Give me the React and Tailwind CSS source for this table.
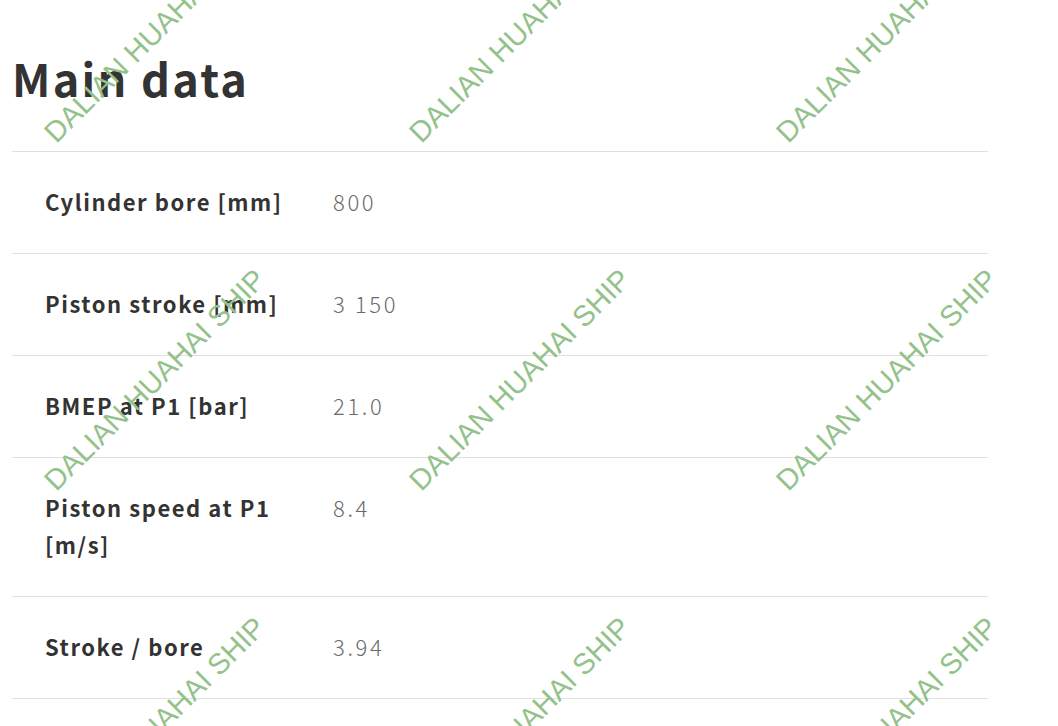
const rows = [
  { label: "Cylinder bore [mm]", value: "800" },
  { label: "Piston stroke [mm]", value: "3 150" },
  { label: "BMEP at P1 [bar]", value: "21.0" },
  { label: "Piston speed at P1 [m/s]", value: "8.4" },
  { label: "Stroke / bore", value: "3.94" },
];

// watermark centres, as seen on the page
const marks = [
  [155, 32], [520, 32], [887, 32],
  [155, 380], [520, 380], [887, 380],
  [155, 728], [520, 728], [887, 728],
];

const App = () => {
  return (
    <div className="relative min-h-[726px] overflow-hidden bg-white font-['Noto_Sans_CJK_JP','Noto_Sans',sans-serif]">
      <div className="w-[976px] ml-[12px] pt-[48px] pb-[40px]">
        <h2 className="text-[45px] leading-[60px] font-bold tracking-[0.05em] text-[#333] mb-[43px]">
          Main data
        </h2>
        <div className="border-b border-[#e0e0e0]">
          {rows.map((r) => (
            <div key={r.label} className="flex border-t border-[#e0e0e0] pt-[31px] pb-[33px]">
              <div className="w-[302px] shrink-0 pl-[33px] pr-[14px] text-[22px] leading-[37px] font-bold tracking-[0.07em] text-[#333]">
                {r.label}
              </div>
              <div className="pl-[19px] text-[22px] leading-[37px] font-light tracking-[0.12em] text-[#6b6b6b]">
                {r.value}
              </div>
            </div>
          ))}
        </div>
      </div>

      {marks.map(([x, y], i) => (
        <span
          key={i}
          className="pointer-events-none absolute whitespace-nowrap font-['Liberation_Sans',Arial,sans-serif] text-[29px] leading-none text-[#93c28a] -translate-x-1/2 -translate-y-1/2 -rotate-45"
          style={{ left: x, top: y }}
        >
          DALIAN HUAHAI SHIP
        </span>
      ))}
    </div>
  );
};

export default App;
